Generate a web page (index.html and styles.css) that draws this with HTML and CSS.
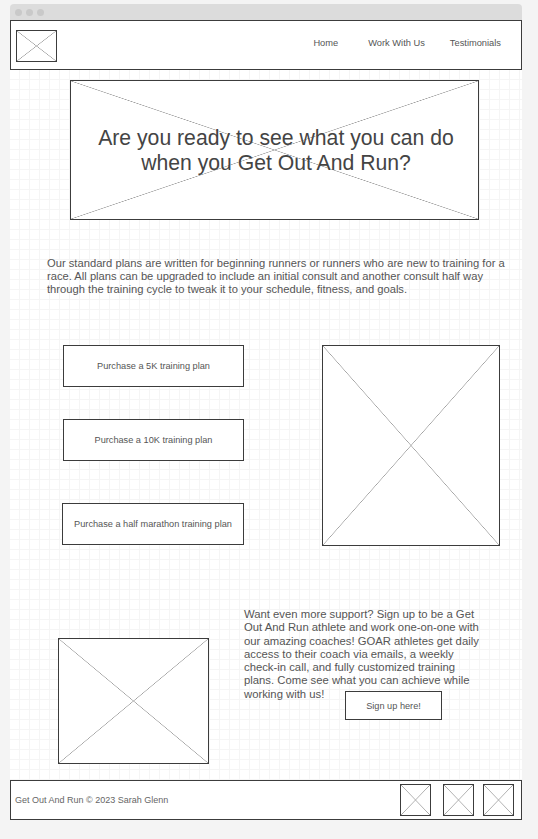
FILE: index.html
```html
<!DOCTYPE html>
<html>
<head>
    <title>Get Out And Run</title>
    <link rel="stylesheet" href="styles.css">
</head>
<body>
    <div class="window">
        <div class="titlebar">
            <span class="dot"></span>
            <span class="dot"></span>
            <span class="dot"></span>
        </div>

        <div class="canvas">
            <header class="header">
                <div class="logo ph"></div>
                <nav class="nav">
                    <a class="nav-home">Home</a>
                    <a class="nav-work">Work With Us</a>
                    <a class="nav-test">Testimonials</a>
                </nav>
            </header>

            <section class="hero ph">
                <h1>Are you ready to see what you can do<br>when you Get Out And Run?</h1>
            </section>

            <p class="intro">Our standard plans are written for beginning runners or runners who are new to training for a race. All plans can be upgraded to include an initial consult and another consult half way through the training cycle to tweak it to your schedule, fitness, and goals.</p>

            <section class="plans">
                <div class="plan-list">
                    <div class="btn btn-5k">Purchase a 5K training plan</div>
                    <div class="btn btn-10k">Purchase a 10K training plan</div>
                    <div class="btn btn-half">Purchase a half marathon training plan</div>
                </div>
                <div class="plans-img ph"></div>
            </section>

            <section class="coach">
                <div class="coach-img ph"></div>
                <div class="coach-copy">
                    <p>Want even more support? Sign up to be a Get Out And Run athlete and work one-on-one with our amazing coaches! GOAR athletes get daily access to their coach via emails, a weekly check-in call, and fully customized training plans. Come see what you can achieve while working with us!</p>
                    <div class="btn btn-signup">Sign up here!</div>
                </div>
            </section>

            <footer class="footer">
                <span class="copy">Get Out And Run &copy; 2023 Sarah Glenn</span>
                <div class="socials">
                    <div class="social ph"></div>
                    <div class="social social-mid ph"></div>
                    <div class="social ph"></div>
                </div>
            </footer>
        </div>
    </div>
</body>
</html>
```

FILE: styles.css
```css
body {
    margin: 0;
    background-color: #f4f4f4;
    font-family: "Liberation Sans", Arial, sans-serif;
    color: #555;
}
.window {
    width: 512px;
    margin: 4px 0 0 10px;
}
.titlebar {
    height: 16px;
    background-color: #dcdcdc;
    border-radius: 4px 4px 0 0;
    display: flex;
    align-items: center;
    gap: 4px;
    padding-left: 5px;
}
.dot {
    width: 7px;
    height: 7px;
    border-radius: 50%;
    background-color: #c9c9c9;
}
.canvas {
    background-color: #fff;
    background-image:
        linear-gradient(to right, transparent 9px, #f5f5f5 9px, #f5f5f5 10px, transparent 10px),
        linear-gradient(to bottom, transparent 9px, #f5f5f5 9px, #f5f5f5 10px, transparent 10px);
    background-size: 10px 10px;
    display: flex;
    flex-direction: column;
}
/* placeholder box with an X across it */
.ph {
    box-sizing: border-box;
    border: 1px solid #3c3c3c;
    background-color: #fff;
    background-image:
        linear-gradient(to top right, transparent calc(50% - 0.6px), #a0a0a0 50%, transparent calc(50% + 0.6px)),
        linear-gradient(to bottom right, transparent calc(50% - 0.6px), #a0a0a0 50%, transparent calc(50% + 0.6px));
}
.header {
    box-sizing: border-box;
    height: 50px;
    border: 1px solid #3c3c3c;
    background-color: #fff;
    display: flex;
    align-items: center;
    justify-content: space-between;
    padding: 0 20px 0 5px;
}
.logo {
    width: 41px;
    height: 32px;
    margin-top: 1px;
}
.nav {
    display: flex;
    font-size: 9.3px;
    color: #555;
    margin-bottom: 4px;
}
.nav-home {
    margin-right: 30px;
}
.nav-work {
    margin-right: 25px;
}
.hero {
    width: 409px;
    height: 140px;
    margin: 10px 0 0 60px;
    display: flex;
    align-items: center;
    justify-content: center;
}
.hero h1 {
    margin: 0;
    font-weight: normal;
    font-size: 21.2px;
    line-height: 25px;
    color: #444;
    text-align: center;
    padding-left: 3px;
}
.intro {
    width: 462px;
    margin: 37px 0 0 37px;
    font-size: 11.2px;
    line-height: 13px;
}
.plans {
    display: flex;
    margin-top: 49px;
}
.plan-list {
    display: flex;
    flex-direction: column;
    margin-left: 52px;
    width: 182px;
}
.btn {
    box-sizing: border-box;
    border: 1px solid #3c3c3c;
    background-color: #fff;
    font-size: 9.2px;
    color: #555;
    display: flex;
    align-items: center;
    justify-content: center;
}
.btn-5k, .btn-10k {
    width: 181px;
    height: 42px;
    margin-left: 1px;
}
.btn-10k {
    margin-top: 32px;
}
.btn-half {
    width: 182px;
    height: 42px;
    margin-top: 42px;
}
.plans-img {
    width: 178px;
    height: 201px;
    margin-left: 78px;
}
.coach {
    display: flex;
    align-items: flex-start;
    margin-top: 62px;
}
.coach-img {
    width: 151px;
    height: 126px;
    margin: 30px 0 0 48px;
}
.coach-copy {
    margin-left: 35px;
    width: 236px;
}
.coach-copy p {
    margin: 0;
    font-size: 11.3px;
    line-height: 13.3px;
}
.btn-signup {
    width: 97px;
    height: 29px;
    margin: -10px 0 0 101px;
}
.footer {
    box-sizing: border-box;
    height: 40px;
    margin-top: 16px;
    border: 1px solid #3c3c3c;
    background-color: #fff;
    display: flex;
    align-items: center;
    justify-content: space-between;
    padding: 0 7px 0 4px;
}
.copy {
    font-size: 9px;
    color: #666;
}
.socials {
    display: flex;
    gap: 9px;
}
.social {
    width: 31px;
    height: 32px;
}
.social-mid {
    margin-left: 3px;
}
```
